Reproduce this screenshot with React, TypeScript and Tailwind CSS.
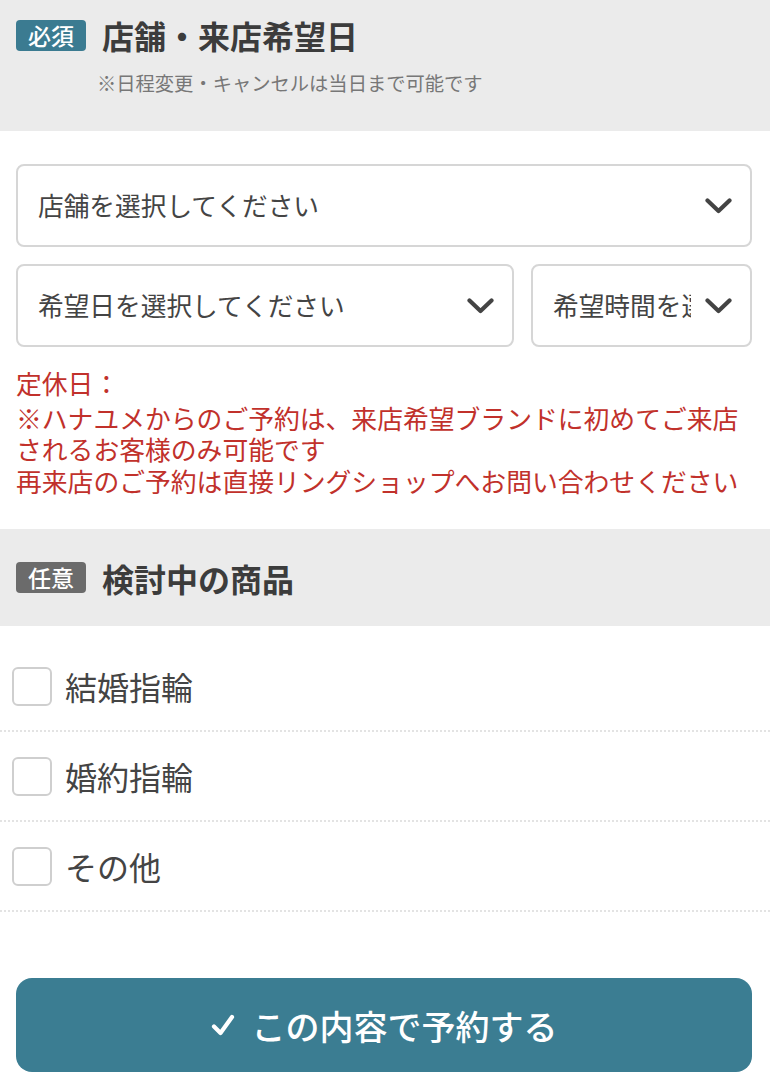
import { useState } from 'react'

const font = { fontFamily: '"Noto Sans CJK JP", "Noto Sans", sans-serif' }

function Chevron() {
    return (
        <svg width="27" height="16" viewBox="0 0 27 16" className="shrink-0">
            <polyline points="2.5,2.5 13.5,13 24.5,2.5" fill="none" stroke="#444" strokeWidth="4.2" strokeLinecap="round" strokeLinejoin="round" />
        </svg>
    )
}

function SelectBox({ label, className }: { label: string; className?: string }) {
    return (
        <div className={'h-[83px] rounded-[8px] border-2 border-[#d6d6d6] bg-white flex items-center pl-[20px] pr-[18px] gap-[14px] ' + (className ?? '')}>
            <span className="flex-1 min-w-0 overflow-hidden whitespace-nowrap text-[25.7px] text-[#444]">{label}</span>
            <Chevron />
        </div>
    )
}

function SectionHead({ badge, badgeColor, title, note }: { badge: string; badgeColor: string; title: string; note?: string }) {
    return (
        <div className="bg-[#ebebeb] px-4">
            <div className="flex items-center gap-4">
                <span className={'w-[70px] h-[31px] rounded-[4px] flex items-center justify-center text-white text-[23px] font-medium leading-none ' + badgeColor}>{badge}</span>
                <h2 className="text-[32px] font-bold text-[#3c3c3c] leading-[40px]">{title}</h2>
            </div>
            {note && <p className="ml-[81px] mt-[14px] text-[19.3px] text-[#777] leading-[28px]">{note}</p>}
        </div>
    )
}

export default function App() {
    const [checked, setChecked] = useState<string[]>([])
    const items = ['結婚指輪', '婚約指輪', 'その他']

    const toggle = (v: string) => {
        setChecked(checked.includes(v) ? checked.filter((c) => c !== v) : [...checked, v])
    }

    return (
        <main style={font} className="w-[770px] min-h-[1084px] bg-white">
            <div className="bg-[#ebebeb] pt-[15px] pb-[34px]">
                <SectionHead badge="必須" badgeColor="bg-[#3b7b91]" title="店舗・来店希望日" note="※日程変更・キャンセルは当日まで可能です" />
            </div>

            <div className="pl-4 pr-[18px] pt-[33px] pb-[33px]">
                <SelectBox label="店舗を選択してください" />
                <div className="flex gap-[17px] mt-[17px]">
                    <SelectBox label="希望日を選択してください" className="flex-1" />
                    <SelectBox label="希望時間を選択してください" className="w-[221px]" />
                </div>
                <div className="mt-[20px] text-[25.8px] leading-[31.5px] text-[#c1312b]">
                    <p className="mb-[3px]">定休日：</p>
                    <p>※ハナユメからのご予約は、来店希望ブランドに初めてご来店</p>
                    <p>されるお客様のみ可能です</p>
                    <p>再来店のご予約は直接リングショップへお問い合わせください</p>
                </div>
            </div>

            <div className="bg-[#ebebeb] h-[97px] flex items-center">
                <div className="w-full">
                    <SectionHead badge="任意" badgeColor="bg-[#6b6b6b]" title="検討中の商品" />
                </div>
            </div>

            <ul className="pt-4">
                {items.map((item) => (
                    <li key={item} className="h-[90px] border-b-2 border-dotted border-[#e3e3e3] px-3 flex items-center">
                        <label className="flex items-center gap-[13px] cursor-pointer">
                            <span
                                onClick={() => toggle(item)}
                                className="w-[40px] h-[39px] rounded-[6px] border-2 border-[#cfcfcf] bg-white flex items-center justify-center"
                            >
                                {checked.includes(item) && (
                                    <svg width="22" height="18" viewBox="0 0 22 18"><polyline points="2,9 8,15 20,3" fill="none" stroke="#3b7d92" strokeWidth="3.5" /></svg>
                                )}
                            </span>
                            <span className="text-[32px] text-[#444] leading-[40px]">{item}</span>
                        </label>
                    </li>
                ))}
            </ul>

            <div className="pl-4 pr-[18px] mt-[66px]">
                <button type="button" className="w-full h-[94px] rounded-[16px] bg-[#3b7d92] text-white flex items-center justify-center gap-[17px]">
                    <svg width="24" height="22" viewBox="0 0 24 22">
                        <polyline points="3,12.5 9.5,19 21,3" fill="none" stroke="#fff" strokeWidth="4.2" strokeLinecap="round" strokeLinejoin="round" />
                    </svg>
                    <span className="text-[34px] font-medium">この内容で予約する</span>
                </button>
            </div>
        </main>
    )
}
